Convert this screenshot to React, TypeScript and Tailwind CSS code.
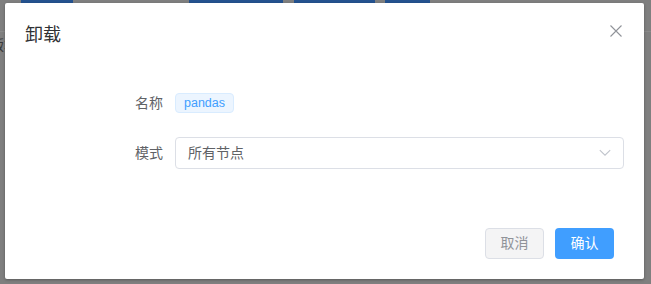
import React from "react";

const font = {
  fontFamily:
    '"Helvetica Neue", Helvetica, "Liberation Sans", "Noto Sans CJK SC", sans-serif',
};

export default function App() {
  return (
    <div
      className="relative w-[651px] h-[284px] overflow-hidden bg-[#7f7f7f]"
      style={font}
    >
      {/* dimmed page behind */}
      <div className="flex h-[3px]">
        <div className="ml-[21px] w-[52px] bg-[#24528f]" />
        <div className="ml-[116px] w-[94px] bg-[#24528f]" />
        <div className="ml-[11px] w-[81px] bg-[#24528f]" />
        <div className="ml-[10px] w-[45px] bg-[#24528f]" />
      </div>
      <div className="mt-[28px] h-px bg-[#8a8a8a]" />
      <div className="ml-[-10px] mt-[3px] text-[14px] leading-[20px] text-[#3a3a3a]">
        版本
      </div>

      {/* dialog */}
      <div className="absolute left-[5px] top-[3px] w-[639px] h-[276px] bg-white rounded-[2px] shadow-[0_1px_3px_rgba(0,0,0,0.3)] flex flex-col">
        <div className="flex items-start justify-between pt-[20px] px-[20px] pb-[10px]">
          <div className="text-[18px] leading-[24px] text-[#303133]">卸载</div>
          <button className="mt-[2px] mr-[2px] w-[12px] h-[12px] flex items-center justify-center">
            <svg width="12" height="12" viewBox="0 0 12 12">
              <path
                d="M0.5 0.5 L11.5 11.5 M11.5 0.5 L0.5 11.5"
                stroke="#909399"
                strokeWidth="1.1"
                fill="none"
              />
            </svg>
          </button>
        </div>

        <div className="pt-[30px] px-[20px] flex flex-col gap-[18px]">
          <div className="flex items-center h-[32px]">
            <div className="w-[150px] pr-[12px] text-right text-[14px] text-[#606266]">
              名称
            </div>
            <span className="inline-flex items-center h-[20px] px-[8px] rounded-[4px] bg-[#ecf5ff] border border-[#d9ecff] text-[12.5px] text-[#409eff]">
              pandas
            </span>
          </div>
          <div className="flex items-center h-[32px]">
            <div className="w-[150px] pr-[12px] text-right text-[14px] text-[#606266]">
              模式
            </div>
            <div className="flex-1 h-[32px] border border-[#dcdfe6] rounded-[4px] flex items-center justify-between pl-[12px] pr-[12px]">
              <span className="text-[14px] text-[#606266]">所有节点</span>
              <svg width="12" height="8" viewBox="0 0 12 8">
                <path
                  d="M0.8 1.2 L6 6.2 L11.2 1.2"
                  stroke="#c0c4cc"
                  strokeWidth="1.1"
                  fill="none"
                />
              </svg>
            </div>
          </div>
        </div>

        <div className="mt-auto flex justify-end gap-[11px] pr-[30px] pb-[20px]">
          <button className="h-[31px] w-[59px] rounded-[4px] border border-[#dcdfe6] bg-[#f4f4f5] text-[14px] text-[#909399]">
            取消
          </button>
          <button className="h-[31px] w-[59px] rounded-[4px] bg-[#409eff] text-[14px] text-white">
            确认
          </button>
        </div>
      </div>
    </div>
  );
}
